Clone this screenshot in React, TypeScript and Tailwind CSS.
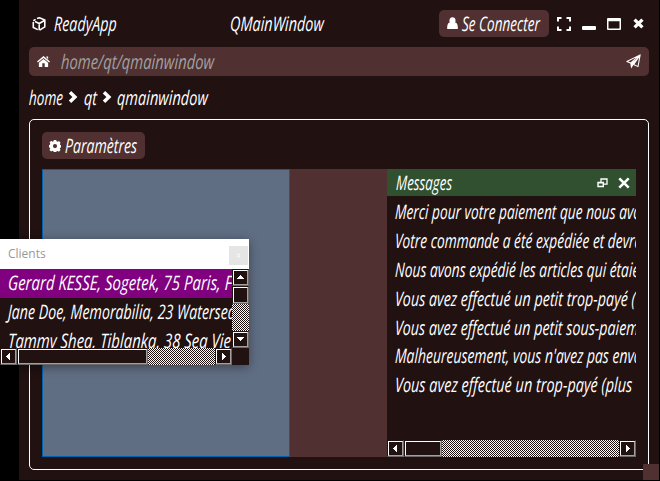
import { useLayoutEffect, useRef, useState, type ReactNode } from 'react';

/* Narrow slanted lettering, condensed horizontally to the given advance width. */
function Ink({ width, children }: { width: number; children: string }) {
  const ref = useRef<HTMLSpanElement>(null);
  const [scale, setScale] = useState(0.7);
  useLayoutEffect(() => {
    if (ref.current) setScale(width / ref.current.offsetWidth);
  }, [width]);
  return (
    <span className="inline-block shrink-0" style={{ width }}>
      <span
        ref={ref}
        className="inline-block origin-left whitespace-nowrap font-['Open_Sans',sans-serif] text-[20px] leading-[27px] font-medium italic [font-variant-ligatures:none]"
        style={{ transform: `scaleX(${scale}) skewX(-3deg)` }}
      >
        {children}
      </span>
    </span>
  );
}

function Icon({ size = 14, className = '', children }: { size?: number; className?: string; children: ReactNode }) {
  return (
    <svg width={size} height={size} viewBox="0 0 14 14" fill="currentColor" className={`shrink-0 ${className}`}>
      {children}
    </svg>
  );
}

const Chevron = () => (
  <svg width="10" height="14" viewBox="0 0 10 14" fill="currentColor" className="shrink-0">
    <path d="M3.2 0 9.4 6 3.2 12 .8 9.6 4.4 6 .8 2.400z" />
  </svg>
);

const arrows = {
  up: 'M6 4h1v1h1v1h1v1h1v1H3V7h1V6h1V5h1z',
  down: 'M3 4h7v1H9v1H8v1H7v1H6V7H5V6H4V5H3z',
  left: 'M7 3h1v7H7V9H6V8H5V7H4V6h1V5h1V4h1z',
  right: 'M5 3h1v1h1v1h1v1h1v1H8v1H7v1H6v1H5z',
};

function Bevel({ className, arrow }: { className: string; arrow?: keyof typeof arrows }) {
  return (
    <div className={`shrink-0 border border-t-[#211111] border-r-[#696969] border-b-[#696969] border-l-[#211111] bg-[#211111] ${className}`}>
      <div className="h-full w-full border border-t-white border-r-[#a0a0a0] border-b-[#a0a0a0] border-l-white">
        {arrow && (
          <svg width="13" height="13" viewBox="0 0 13 13" fill="white" shapeRendering="crispEdges" className="block">
            <path d={arrows[arrow]} />
          </svg>
        )}
      </div>
    </div>
  );
}

const Track = () => (
  <div className="flex-1 bg-[repeating-conic-gradient(#fff_0_25%,#211111_0_50%)] bg-[length:2px_2px]" />
);

const messages: [string, number][] = [
  ['Merci pour votre paiement que nous avo', 246],
  ['Votre commande a été expédiée et devra', 247],
  ['Nous avons expédié les articles qui étaie', 244],
  ['Vous avez effectué un petit trop-payé (', 241],
  ['Vous avez effectué un petit sous-paiem', 244],
  ["Malheureusement, vous n'avez pas envo", 247],
  ['Vous avez effectué un trop-payé (plus', 237],
];

const clients: [string, number][] = [
  ['Gerard KESSE, Sogetek, 75 Paris, F', 224],
  ['Jane Doe, Memorabilia, 23 Watersea', 228],
  ['Tammy Shea, Tiblanka, 38 Sea Vie', 223],
];

function TitleBar() {
  return (
    <header className="flex h-[27px] items-center">
      <Icon size={14} className="ml-[3px]">
        <path d="M5 1.600 7.500.8 12.800 3v6.800L7.600 13.200M5.800 12.600 1.300 10.400V5M1.300 3.700 3.600 2.400M3 4.600 7.200 6.500l4.800-2.700M7.200 6.500v6.700" fill="none" stroke="currentColor" strokeWidth="1.600" />
      </Icon>
      <div className="ml-[8px]"><Ink width={63}>ReadyApp</Ink></div>
      <div className="ml-[113px]"><Ink width={94}>QMainWindow</Ink></div>
      <button className="ml-auto flex h-[27px] w-[110px] items-center rounded-[5px] bg-[#503030] pl-[7px]">
        <Icon size={13}>
          <ellipse cx="7" cy="4" rx="3.3" ry="3.8" />
          <path d="M3.500 6Q7 8.500 10.500 6 12.800 7.500 12.800 12q0 1-1 1H2.200q-1 0-1-1Q1.200 7.500 3.500 6z" />
        </Icon>
        <div className="ml-[3px]"><Ink width={78}>Se Connecter</Ink></div>
      </button>
      <div className="ml-2 flex w-[92px] items-center">
        <Icon>
          <path d="M0 0h4.500v2H2v2.500H0zM9.500 0H14v4.500h-2V2H9.500zM0 9.500h2V12h2.500v2H0zM12 9.500h2V14H9.500v-2H12z" />
        </Icon>
        <Icon className="ml-[11px]"><rect y="9" width="14" height="4" rx="1" /></Icon>
        <Icon className="ml-[11px]"><path d="M1 1h12q1 0 1 1v10q0 1-1 1H1q-1 0-1-1V2q0-1 1-1zm.500 3.200v7.300h11V4.200z" fillRule="evenodd" /></Icon>
        <Icon size={11} className="ml-3"><path d="m2 2 10 10m0-10L2 12" stroke="currentColor" strokeWidth="4.200" /></Icon>
      </div>
    </header>
  );
}

function MessagesDock() {
  return (
    <section className="flex w-[249px] flex-col overflow-hidden">
      <div className="flex h-[27px] shrink-0 items-center bg-[#305030] pr-[6px] pl-[9px]">
        <div><Ink width={56}>Messages</Ink></div>
        <svg width="11" height="10" viewBox="0 0 11 10" fill="none" stroke="white" className="ml-auto">
          <path d="M4 4V.8h6v5.400H6.500M4 1h6" strokeWidth="1.300" />
          <path d="M1 4.500h5.300v4H1zM1 4.700h5.300" strokeWidth="1.400" />
        </svg>
        <Icon size={12} className="ml-[10px]"><path d="m1.500 1.500 11 11m0-11-11 11" stroke="currentColor" strokeWidth="3" /></Icon>
      </div>
      <ul className="flex-1 pt-[2px] pl-[8px]">
        {messages.map(([text, width]) => (
          <li key={text} className="flex h-[28.9px] items-start"><Ink width={width}>{text}</Ink></li>
        ))}
      </ul>
      <div className="flex h-[17px] shrink-0">
        <Bevel className="h-[17px] w-[17px]" arrow="left" />
        <Bevel className="h-[17px] w-[38px]" />
        <Track />
        <Bevel className="h-[17px] w-[17px]" arrow="right" />
      </div>
    </section>
  );
}

function ClientsWindow() {
  return (
    <aside className="absolute top-[239px] left-0 flex h-[126px] w-[249px] flex-col bg-[#211111] shadow-[0_2px_10px_rgba(0,0,0,0.4)]">
      <div className="flex h-[30px] shrink-0 items-center justify-between bg-white pr-px pl-2">
        <span className="font-['Open_Sans',sans-serif] text-[12px] text-[#999]">Clients</span>
        <button className="mt-[3px] flex h-[19px] w-[19px] items-center justify-center bg-[#e5e5e5] text-white">
          <Icon size={5}><path d="m2 2 10 10m0-10L2 12" stroke="#f5f5f5" strokeWidth="3" /></Icon>
        </button>
      </div>
      <div className="flex h-[79px] shrink-0">
        <ul className="w-[232px] overflow-hidden">
          {clients.map(([text, width], i) => (
            <li key={text} className={`flex h-[29px] items-start pl-[8px] ${i === 0 ? 'bg-[#800080]' : ''}`}>
              <Ink width={width}>{text}</Ink>
            </li>
          ))}
        </ul>
        <div className="flex w-[17px] flex-col">
          <Bevel className="h-[17px] w-[17px]" arrow="up" />
          <Bevel className="h-[18px] w-[17px]" />
          <Track />
          <Bevel className="h-[17px] w-[17px]" arrow="down" />
        </div>
      </div>
      <div className="flex h-[17px] w-[232px] shrink-0">
        <Bevel className="h-[17px] w-[17px]" arrow="left" />
        <Bevel className="h-[17px] w-[131px]" />
        <Track />
        <Bevel className="h-[17px] w-[17px]" arrow="right" />
      </div>
    </aside>
  );
}

export default function App() {
  return (
    <div className="relative h-[481px] w-[660px] overflow-hidden bg-black pr-px pb-px pl-[19px] text-white">
      <main className="flex h-full flex-col bg-[#211111] px-[10px] pt-[10px] pb-[10px]">
        <TitleBar />
        <div className="mt-[10px] flex h-[29px] w-full shrink-0 items-center rounded-[5px] bg-[#503030] pr-2 pl-2">
          <Icon size={13}>
            <path d="m7 1 7 6-1 1.200-6-5.100-6 5.100L0 7zM10 1.500h2v3l-2-2zM7 4.200l5 4.100V13H8.300V9H5.700v4H2V8.300z" />
          </Icon>
          <div className="ml-[11px] text-[#a0a0a0]"><Ink width={153}>home/qt/qmainwindow</Ink></div>
          <Icon size={15} className="ml-auto">
            <path d="M13.200.8.8 7l3.400 1.500zM13.200.8l-2 11-4-2z" fill="none" stroke="currentColor" strokeWidth="1" strokeLinejoin="round" />
            <path d="M11 4 4 8.600l.8 5L7.200 9.800z" />
          </Icon>
        </div>
        <nav className="mt-[8px] flex h-[27px] shrink-0 items-center">
          <Ink width={34}>home</Ink>
          <div className="ml-[5px] flex"><Chevron /></div>
          <div className="ml-[6px]"><Ink width={13}>qt</Ink></div>
          <div className="ml-[5px] flex"><Chevron /></div>
          <div className="ml-[5px]"><Ink width={91}>qmainwindow</Ink></div>
        </nav>
        <section className="mt-[8px] flex flex-1 flex-col rounded-[5px] border border-white px-3 pt-3 pb-3">
          <button className="flex h-[27px] w-[103px] shrink-0 items-center rounded-[5px] bg-[#503030] pl-[7px]">
            <Icon size={12}>
              <path d="M5.600 0h2.800l.4 1.500 1.300.6 1.500-.9 1.900 1.900-.8 1.500.5 1.200 1.300.3v2.500l-1.400.4-.5 1.200.9 1.500-2 1.900-1.400-.9-1.300.5-.4 1.200H5.600l-.4-1.300-1.200-.5-1.500.9-2-1.900.9-1.500L.9 8.900-.3 8.500V6l1.400-.4.4-1.200-.8-1.500L2.600 1l1.500.9 1.100-.5zM7 4.700a2.400 2.400 0 1 0 0 4.800 2.400 2.400 0 0 0 0-4.800z" fillRule="evenodd" />
            </Icon>
            <div className="ml-[4px]"><Ink width={72}>Paramètres</Ink></div>
          </button>
          <div className="mt-[10px] flex h-[288px] w-[594px]">
            <div className="w-[248px] border border-[#0060b0] bg-[#606e84]" />
            <div className="w-[97px] bg-[#503030]" />
            <MessagesDock />
          </div>
        </section>
      </main>
      <div className="absolute right-px bottom-px h-4 w-4 bg-[#503030]" />
      <ClientsWindow />
    </div>
  );
}
